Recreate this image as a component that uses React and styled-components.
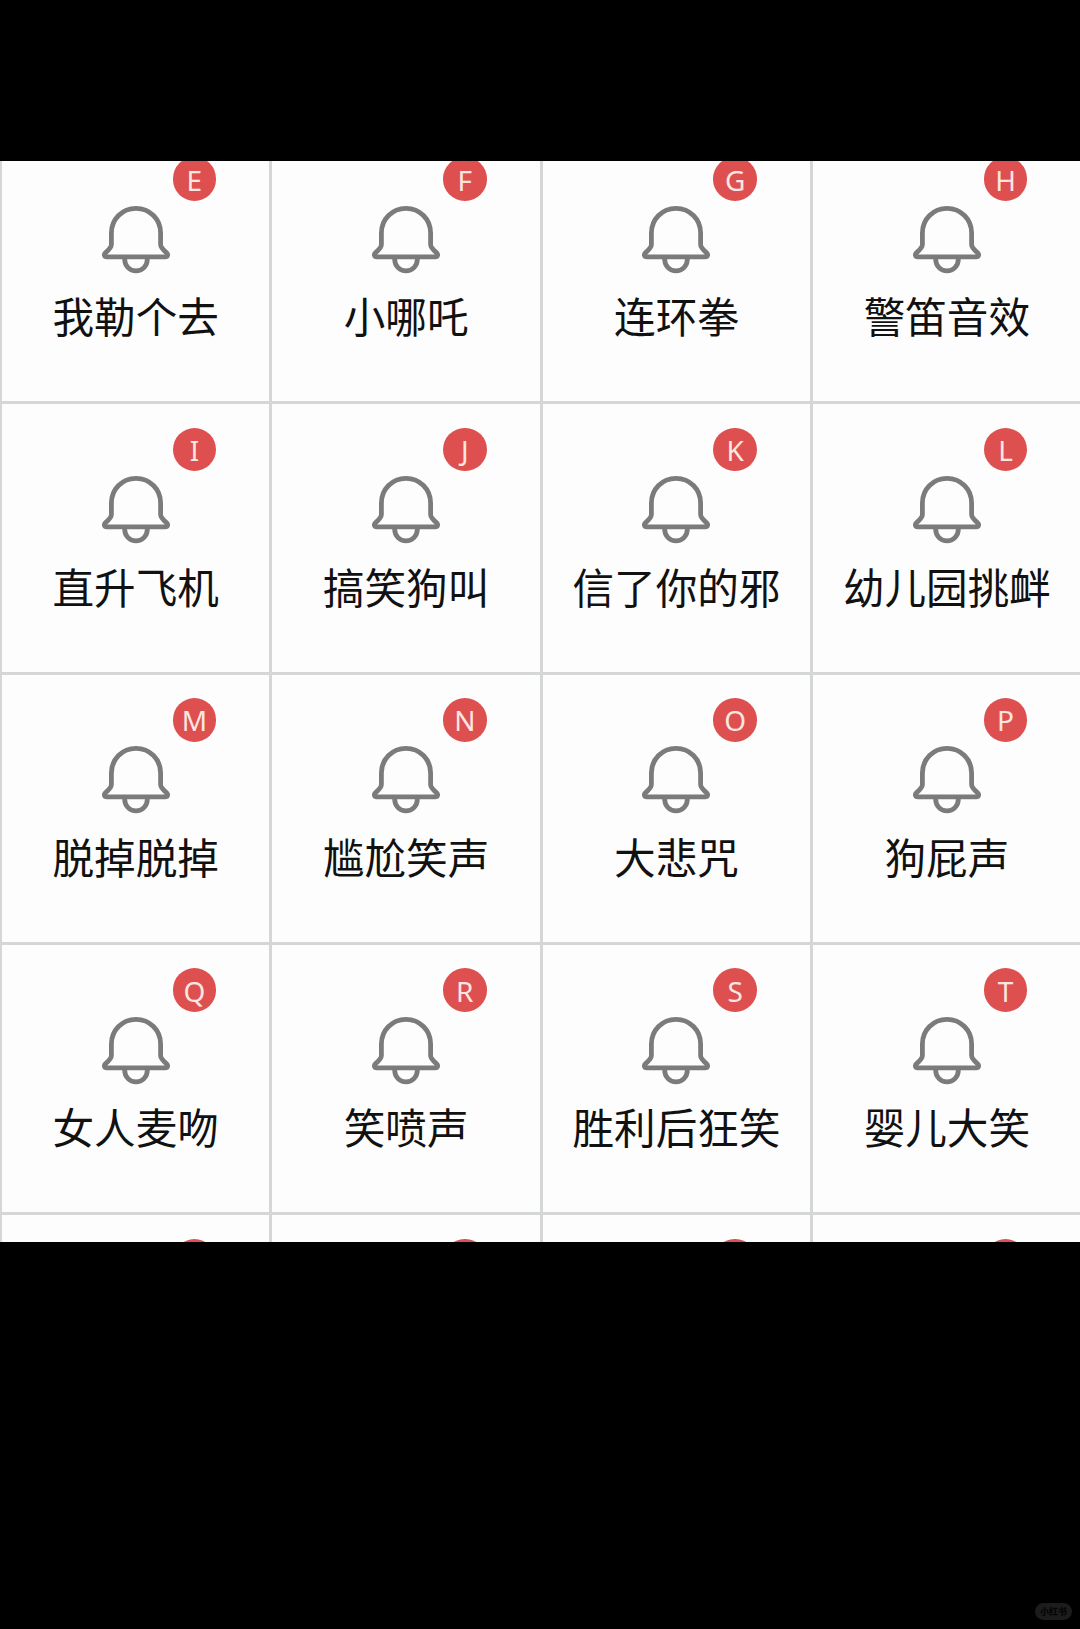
import React, { useState } from 'react';
import styled, { createGlobalStyle } from 'styled-components';

const GlobalStyle = createGlobalStyle`
    body {
        margin: 0;
        background-color: #000000;
    }
`;

const Page = styled.div`
    display: flex;
    flex-direction: column;
    width: 1080px;
    height: 1629px;
    overflow: hidden;
    background-color: #000000;
`;

const Board = styled.main`
    display: flex;
    flex-direction: column;
    justify-content: flex-start;
    height: 1081.3px;
    margin-top: 160.7px;
    overflow: hidden;
    background-color: #fdfdfd;
`;

const Grid = styled.div`
    display: grid;
    flex-shrink: 0;
    grid-template-columns: repeat(4, 270.4px);
    grid-auto-rows: 270.35px;
    margin: -29.6px 0 0 -1px;
`;

const Tile = styled.div`
    position: relative;
    display: flex;
    flex-direction: column;
    align-items: center;
    box-sizing: border-box;
    padding: 71.6px 0 0;
    border-top: 3px solid #d5d6d6;
    border-left: 3px solid #d5d6d6;
`;

const Badge = styled.span`
    position: absolute;
    top: 23.2px;
    left: 170.6px;
    display: flex;
    align-items: center;
    justify-content: center;
    box-sizing: border-box;
    width: 43.6px;
    height: 43.6px;
    padding-top: 1px;
    border-radius: 50%;
    background-color: #dd504f;
    font-family: 'Noto Sans', sans-serif;
    font-size: 28px;
    line-height: 40px;
    color: #fbe6e2;
`;

const Bell = styled.svg`
    display: block;
    width: 68px;
    height: 68px;
    fill: none;
    stroke: #7b7b7b;
    stroke-width: 4.8;
    stroke-linejoin: round;
    stroke-linecap: butt;
`;

const Label = styled.div`
    margin-top: 11.5px;
    font-family: 'Noto Sans CJK SC', sans-serif;
    font-size: 41.6px;
    line-height: 60px;
    white-space: nowrap;
    color: #111111;
`;

const Footer = styled.footer`
    display: flex;
    flex: 1;
    align-items: flex-end;
    justify-content: flex-end;
    padding: 0 8px 9px 0;
`;

const Mark = styled.span`
    width: 37px;
    height: 17px;
    border-radius: 9px;
    background-color: #1c1c1c;
    font-family: 'Noto Sans CJK SC', sans-serif;
    font-size: 9px;
    font-weight: 900;
    line-height: 17px;
    text-align: center;
    color: #050505;
`;

const BellIcon = () => (
    <Bell viewBox="0 0 68 68">
        <path d="M34 2.4C20.2 2.4 9.4 13.3 9.4 27V38.5C9.4 41.4 7.6 43.2 3.6 46.6C1.6 48.4 2.2 50.8 4.8 50.8H63.2C65.8 50.8 66.4 48.4 64.4 46.6C60.4 43.2 58.6 41.4 58.6 38.5V27C58.6 13.3 47.8 2.4 34 2.4Z" />
        <path d="M22.7 51V53.6A11.3 11.3 0 0 0 45.3 53.6V51" />
    </Bell>
);

const SoundTile = ({ sound }) => (
    <Tile>
        <Badge>{sound.letter}</Badge>
        <BellIcon />
        <Label>{sound.name}</Label>
    </Tile>
);

const App = () => {
    const [sounds] = useState([
        { letter: 'E', name: '我勒个去' },
        { letter: 'F', name: '小哪吒' },
        { letter: 'G', name: '连环拳' },
        { letter: 'H', name: '警笛音效' },
        { letter: 'I', name: '直升飞机' },
        { letter: 'J', name: '搞笑狗叫' },
        { letter: 'K', name: '信了你的邪' },
        { letter: 'L', name: '幼儿园挑衅' },
        { letter: 'M', name: '脱掉脱掉' },
        { letter: 'N', name: '尴尬笑声' },
        { letter: 'O', name: '大悲咒' },
        { letter: 'P', name: '狗屁声' },
        { letter: 'Q', name: '女人麦吻' },
        { letter: 'R', name: '笑喷声' },
        { letter: 'S', name: '胜利后狂笑' },
        { letter: 'T', name: '婴儿大笑' }
    ]);
    // the next row only peeks in at the bottom edge
    const [nextRow] = useState([1, 2, 3, 4]);

    return (<Page>
        <GlobalStyle />
        <Board>
            <Grid>
                {sounds.map(item => <SoundTile key={item.letter} sound={item} />)}
                {nextRow.map(item => <Tile key={item}><Badge /></Tile>)}
            </Grid>
        </Board>
        <Footer>
            <Mark>小红书</Mark>
        </Footer>
    </Page>);
}

export default App;
